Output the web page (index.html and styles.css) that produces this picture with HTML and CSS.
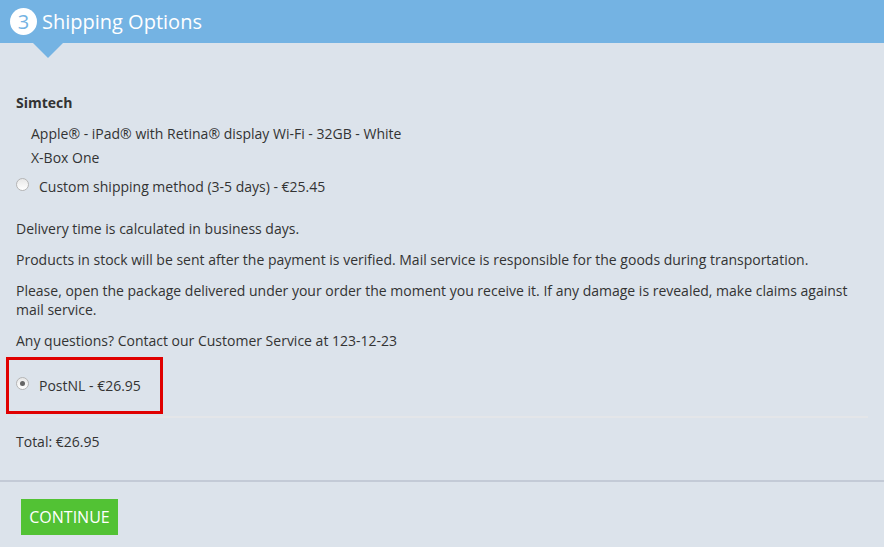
FILE: index.html
```html
<!DOCTYPE html>
<html>
<head>
    <title>Shipping Options</title>
    <link rel="stylesheet" href="styles.css">
</head>
<body>
    <div class="step-header">
        <span class="step-number">3</span>
        <span class="step-title">Shipping Options</span>
    </div>

    <div class="step-body">
        <div class="vendor-name">Simtech</div>
        <ul class="product-list">
            <li>Apple® - iPad® with Retina® display Wi-Fi - 32GB - White</li>
            <li>X-Box One</li>
        </ul>
        <label class="shipping-option">
            <span class="radio"></span>
            Custom shipping method (3-5 days) - €25.45
        </label>

        <div class="shipping-info">
            <p>Delivery time is calculated in business days.</p>
            <p>Products in stock will be sent after the payment is verified. Mail service is responsible for the goods during transportation.</p>
            <p>Please, open the package delivered under your order the moment you receive it. If any damage is revealed, make claims against mail service.</p>
            <p>Any questions? Contact our Customer Service at 123-12-23</p>
        </div>

        <div class="highlight-box">
            <label class="shipping-option">
                <span class="radio checked"></span>
                PostNL - €26.95
            </label>
        </div>

        <div class="total">Total: €26.95</div>
    </div>

    <div class="step-footer">
        <button class="continue-button">CONTINUE</button>
    </div>
</body>
</html>
```

FILE: styles.css
```css
body {
    font-family: 'Open Sans', Arial, sans-serif;
    font-size: 14px;
    background-color: #dce3eb;
    color: #333;
    margin: 0;
    padding: 0;
}

.step-header {
    position: relative;
    height: 43px;
    background-color: #74b3e3;
    display: flex;
    align-items: center;
    padding-left: 10px;
}

.step-header:after {
    content: '';
    position: absolute;
    left: 33px;
    bottom: -15px;
    border-left: 15px solid transparent;
    border-right: 15px solid transparent;
    border-top: 15px solid #74b3e3;
}

.step-number {
    display: flex;
    justify-content: center;
    align-items: center;
    width: 27px;
    height: 27px;
    border-radius: 50%;
    background-color: #fff;
    color: #74b3e3;
    font-size: 20px;
    margin-right: 5px;
}

.step-title {
    color: #fff;
    font-size: 20px;
}

.step-body {
    padding: 50px 16px 0 16px;
}

.vendor-name {
    font-weight: bold;
    line-height: 20px;
}

.product-list {
    list-style: none;
    margin: 9px 0 0 15px;
    padding: 0;
}

.product-list li {
    line-height: 24px;
}

.shipping-option {
    display: flex;
    align-items: center;
    line-height: 20px;
    margin-top: 7px;
}

.radio {
    width: 11px;
    height: 11px;
    border-radius: 50%;
    border: 1px solid #b5b5b5;
    background: linear-gradient(#e8e8e8, #fff);
    margin-right: 10px;
    margin-top: -5px;
    position: relative;
}

.radio.checked:after {
    content: '';
    position: absolute;
    left: 3px;
    top: 3px;
    width: 5px;
    height: 5px;
    border-radius: 50%;
    background-color: #666;
}

.shipping-info {
    margin-top: 22px;
}

.shipping-info p {
    margin: 0 0 12px 0;
    line-height: 19px;
}

.highlight-box {
    box-sizing: border-box;
    margin: -5px 0 0 -10px;
    width: 157px;
    height: 57px;
    border: 3px solid #e00000;
    padding-left: 7px;
    display: flex;
    align-items: center;
}

.highlight-box .shipping-option {
    margin-top: 0;
}

.total {
    border-top: 2px solid #e4e6e9;
    margin-top: 2px;
    padding-top: 14px;
    line-height: 20px;
    padding-bottom: 28px;
}

.step-footer {
    border-top: 2px solid #c3cad6;
    padding: 17px 21px 16px 21px;
}

.continue-button {
    font-family: 'Open Sans', Arial, sans-serif;
    font-size: 16px;
    color: #fff;
    background-color: #52c234;
    border: none;
    padding: 0;
    width: 97px;
    height: 36px;
    cursor: pointer;
}
```
